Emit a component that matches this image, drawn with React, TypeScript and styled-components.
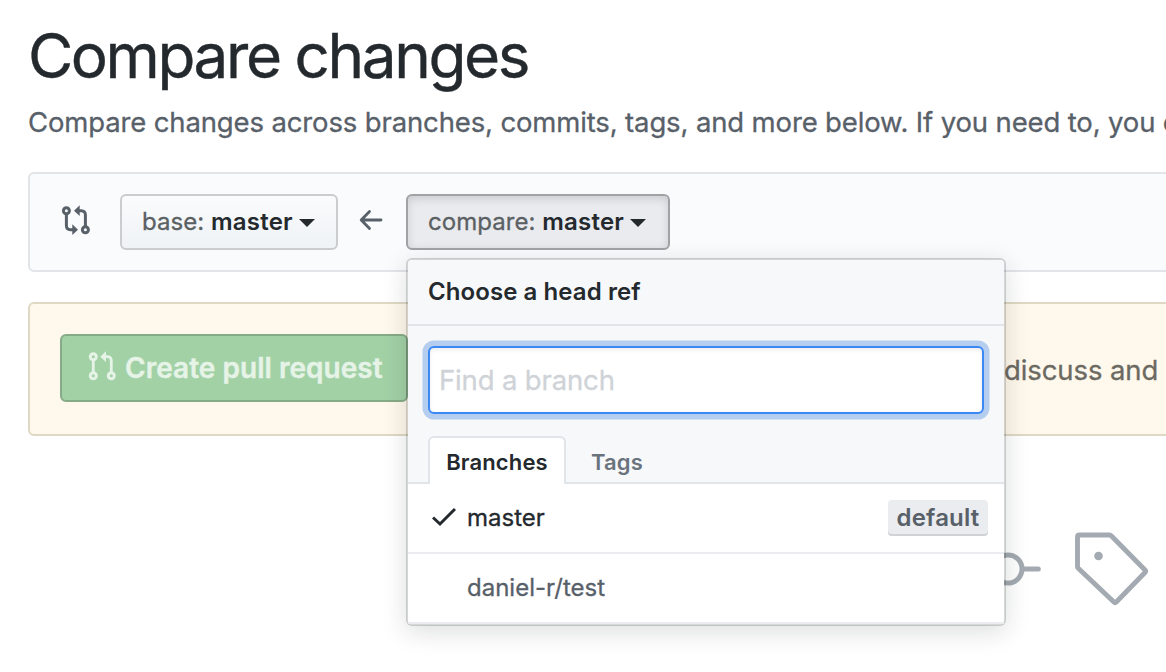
import React from "react";
import styled, { createGlobalStyle, css } from "styled-components";

const GlobalStyle = createGlobalStyle`
  * { box-sizing: border-box; }
  body {
    margin: 0;
    background: #fff;
    color: #24292e;
    font-family: Inter, "Liberation Sans", sans-serif;
    overflow: hidden;
  }
`;

const Page = styled.main`
  width: 1166px;
  height: 672px;
  padding: 18px 0 0 28px;
  overflow: hidden;
`;

const Title = styled.h1`
  margin: 0;
  font-size: 62px;
  line-height: 76px;
  font-weight: 400;
  letter-spacing: -2.43px;
  -webkit-text-stroke: 0.4px currentColor;
  white-space: nowrap;
`;

const Lead = styled.p`
  margin: 7px 0 29px;
  font-size: 27.5px;
  line-height: 42px;
  letter-spacing: -0.14px;
  color: #586069;
  -webkit-text-stroke: 0.3px currentColor;
  white-space: nowrap;
`;

const Panel = styled.section<{ $tone: "plain" | "warm" }>`
  display: flex;
  width: 1300px;
  border: 2px solid;
  border-radius: 6px;
  ${({ $tone }) =>
    $tone === "plain"
      ? css`
          height: 100px;
          padding: 20px 32px;
          background: #fafbfc;
          border-color: #e1e4e8;
        `
      : css`
          height: 134px;
          margin-top: 30px;
          padding: 30px;
          background: #fff8ec;
          border-color: #dfd8c4;
        `}
`;

const BarIcon = styled.span<{ $width: number; $inset?: number }>`
  display: flex;
  align-items: center;
  width: ${({ $width }) => $width}px;
  height: 52px;
  padding-left: ${({ $inset = 0 }) => $inset}px;
  color: #586069;
`;

const RefButton = styled.button<{ $width: number; $open?: boolean }>`
  display: flex;
  align-items: center;
  width: ${({ $width }) => $width}px;
  height: 56px;
  padding: 0 0 0 20px;
  border: 2px solid ${({ $open }) => ($open ? "#a0a2a5" : "#caccce")};
  border-radius: 6px;
  background: ${({ $open }) => ($open ? "#e9ebef" : "linear-gradient(#fafbfc, #eff3f6)")};
  box-shadow: ${({ $open }) => ($open ? "inset 0 3px 8px rgba(27, 31, 35, 0.15)" : "none")};
  color: #24292e;
  font: 600 24px/36px Inter, "Liberation Sans", sans-serif;
  white-space: pre;
`;

const Prefix = styled.span`
  font-weight: 400;
  color: #5b6063;
  letter-spacing: 0.05px;
  -webkit-text-stroke: 0.3px currentColor;
`;

const Current = styled.span`
  letter-spacing: 0.2px;
`;

const Caret = styled.span`
  margin: 1px 0 0 6px;
  border: 8px solid transparent;
  border-top-color: currentColor;
  border-bottom: 0;
`;

const Anchor = styled.div`
  position: relative;
`;

const Menu = styled.div`
  position: absolute;
  top: 64px;
  left: 0;
  width: 600px;
  height: 368px;
  border: 2px solid rgba(27, 31, 35, 0.18);
  border-radius: 6px;
  background: #fff;
  background-clip: padding-box;
  box-shadow: 0 6px 24px rgba(27, 31, 35, 0.15);
`;

const MenuHeader = styled.div`
  height: 66px;
  padding: 0 20px;
  border-bottom: 2px solid #e1e4e8;
  border-radius: 4px 4px 0 0;
  background: #f6f8fa;
  font-size: 24px;
  line-height: 64px;
  font-weight: 600;
  letter-spacing: 0.08px;
`;

const Filters = styled.div`
  height: 158px;
  padding: 20px 20px 0;
  border-bottom: 2px solid #e1e4e8;
  background: #f6f8fa;
`;

const Search = styled.input`
  display: block;
  width: 556px;
  height: 68px;
  padding: 0 9px;
  border: 2px solid #3b88f5;
  border-radius: 6px;
  outline: none;
  background: #fff;
  box-shadow: inset 0 2px 4px rgba(27, 31, 35, 0.075), 0 0 0 5.500px #b5cdee;
  font: 400 27.5px Inter, "Liberation Sans", sans-serif;
  letter-spacing: -0.15px;
  &::placeholder {
    color: #cfd3d8;
    opacity: 1;
    -webkit-text-stroke: 0.3px currentColor;
  }
`;

const Tabs = styled.div`
  display: flex;
  margin-top: 22px;
`;

const Tab = styled.button<{ $active?: boolean }>`
  height: 48px;
  width: ${({ $active }) => ($active ? 138 : 102)}px;
  padding: 2px 0 0;
  border: 2px solid ${({ $active }) => ($active ? "#e1e4e8" : "transparent")};
  border-bottom: 0;
  border-radius: 6px 6px 0 0;
  background: ${({ $active }) => ($active ? "#fff" : "transparent")};
  color: ${({ $active }) => ($active ? "#24292e" : "#6a737d")};
  font: 600 22px/40px Inter, "Liberation Sans", sans-serif;
  letter-spacing: 0.15px;
`;

const Item = styled.div<{ $selected?: boolean }>`
  display: flex;
  align-items: center;
  height: 70px;
  padding: 0 16px 2px 24px;
  border-bottom: 2px solid #eaecef;
  color: ${({ $selected }) => ($selected ? "#24292e" : "#586069")};
  font-size: 24px;
`;

const Mark = styled.span`
  display: flex;
  width: 35px;
`;

const ItemName = styled.span`
  flex: 1;
  -webkit-text-stroke: 0.3px currentColor;
`;

const Badge = styled.span`
  width: 100px;
  height: 36px;
  margin-top: 2px;
  border-radius: 4px;
  background: #eaecef;
  box-shadow: inset 0 -2px 0 #cfd2d6;
  color: #586069;
  font-weight: 600;
  line-height: 35px;
  letter-spacing: 0.2px;
  text-align: center;
`;

const CreateButton = styled.button`
  display: flex;
  align-items: center;
  width: 348px;
  height: 68px;
  padding: 0 0 0 26px;
  border: 2px solid #86ab88;
  border-radius: 6px;
  background: #a2d1a6;
  color: #e6f3e7;
  font: 600 28px Inter, "Liberation Sans", sans-serif;
  letter-spacing: 0.03px;
  -webkit-text-stroke: 0.4px currentColor;
  white-space: nowrap;
  gap: 7px;
`;

const Note = styled.span`
  margin-left: 596px;
  font-size: 27.5px;
  line-height: 72px;
  letter-spacing: -0.1px;
  color: #6b6a62;
  -webkit-text-stroke: 0.3px currentColor;
  white-space: nowrap;
`;

const Stats = styled.div`
  display: flex;
  align-items: center;
  height: 80px;
  margin-top: 93px;
  padding-left: 946px;
  color: #a3aab1;
  gap: 32px;
`;

const CompareIcon = () => (
  <svg width="30" height="32" viewBox="2 0 30 32" overflow="visible" fill="none" stroke="currentColor" strokeWidth="3">
    <circle cx="6.400" cy="6.700" r="3" />
    <circle cx="25.400" cy="25.700" r="3" />
    <path d="M6.400 10V21.500Q6.400 25.700 10.500 25.700H13M25.400 22.500V11Q25.400 6.700 21.300 6.700H19" />
    <path d="M12.300 20.300 18 25.700 12.300 31.100zM19.700 1.300 14 6.700 19.700 12.100z" fill="currentColor" stroke="none" />
  </svg>
);

const PullIcon = () => (
  <svg width="30" height="32" viewBox="0 0 30 32" overflow="visible" fill="none" stroke="currentColor" strokeWidth="3">
    <circle cx="5.300" cy="4.700" r="3" />
    <circle cx="5.300" cy="23.700" r="3" />
    <circle cx="23.300" cy="23.700" r="3" />
    <path d="M5.300 8V20.500M23.300 20.500V9Q23.300 4.700 19.200 4.700H17" strokeWidth="2.800" />
    <path d="M18 -0.700 12.200 4.700 18 10.100z" fill="currentColor" stroke="none" />
  </svg>
);

const ArrowIcon = () => (
  <svg width="24" height="24" viewBox="0 0 24 24" fill="none" stroke="currentColor" strokeWidth="2.8" strokeLinecap="round" strokeLinejoin="round">
    <path d="M10.500 3.500 2.200 12 10.500 20.500M3 12h19" />
  </svg>
);

const CheckIcon = () => (
  <svg width="24" height="20" viewBox="0 0 24 20" fill="none" stroke="currentColor" strokeWidth="3">
    <path d="M1 10.5 8 17 23 2" />
  </svg>
);

const CommitIcon = () => (
  <svg width="68" height="34" viewBox="0 0 68 34" fill="none" stroke="currentColor" strokeWidth="5" strokeLinecap="round">
    <circle cx="34" cy="17" r="14" />
    <path d="M3.500 17H18M50 17h14.300" />
  </svg>
);

const TagIcon = () => (
  <svg width="76" height="76" viewBox="0 0 76 76" fill="none" stroke="currentColor" strokeWidth="4.9" strokeLinejoin="round">
    <path d="M6 4h29.500Q36.500 4 37.500 5L71 39q1.200 1.200 0 2.400L42.300 71q-1.200 1.200-2.400 0L4.500 37.500q-1-1-1-2V6q0-2 2-2z" />
    <circle cx="24.500" cy="25" r="4.3" fill="currentColor" stroke="none" />
  </svg>
);

export default function App() {
  return (
    <>
      <GlobalStyle />
      <Page>
        <Title>Compare changes</Title>
        <Lead>Compare changes across branches, commits, tags, and more below. If you need to, you can</Lead>
        <Panel $tone="plain">
          <BarIcon $width={58}>
            <CompareIcon />
          </BarIcon>
          <RefButton $width={218}>
            <Prefix>base: </Prefix>
            <Current>master</Current>
            <Caret />
          </RefButton>
          <BarIcon $width={68} $inset={21}>
            <ArrowIcon />
          </BarIcon>
          <Anchor>
            <RefButton $width={264} $open>
              <Prefix>compare: </Prefix>
              <Current>master</Current>
              <Caret />
            </RefButton>
            <Menu>
              <MenuHeader>Choose a head ref</MenuHeader>
              <Filters>
                <Search placeholder="Find a branch" />
                <Tabs>
                  <Tab $active>Branches</Tab>
                  <Tab>Tags</Tab>
                </Tabs>
              </Filters>
              <Item $selected>
                <Mark>
                  <CheckIcon />
                </Mark>
                <ItemName>master</ItemName>
                <Badge>default</Badge>
              </Item>
              <Item>
                <Mark />
                <ItemName>daniel-r/test</ItemName>
              </Item>
            </Menu>
          </Anchor>
        </Panel>
        <Panel $tone="warm">
          <CreateButton>
            <PullIcon />
            Create pull request
          </CreateButton>
          <Note>discuss and</Note>
        </Panel>
        <Stats>
          <CommitIcon />
          <TagIcon />
        </Stats>
      </Page>
    </>
  );
}
